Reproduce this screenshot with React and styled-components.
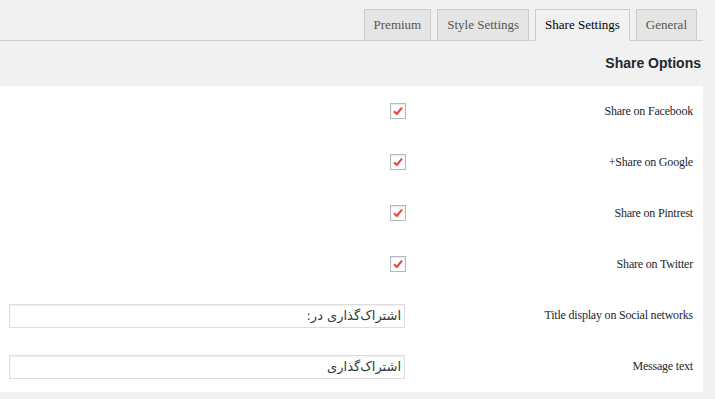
import styled, { createGlobalStyle } from "styled-components";

const GlobalStyle = createGlobalStyle`
    body {
        margin: 0;
        background: #f1f1f1;
        font-family: "Liberation Serif", serif;
        color: #23282d;
    }
`;

const rows = [
    { label: "Share on Facebook", type: "check" },
    { label: "Share on Google+", type: "check" },
    { label: "Share on Pintrest", type: "check" },
    { label: "Share on Twitter", type: "check" },
    { label: "Title display on Social networks", type: "text", value: "اشتراک\u200cگذاری در:" },
    { label: "Message text", type: "text", value: "اشتراک\u200cگذاری" },
];

const tabs = ["General", "Share Settings", "Style Settings", "Premium"];

const Check = () => (
    <CheckBox>
        <svg width="12" height="12" viewBox="0 0 12 12">
            <polyline
                points="2,6.2 4.8,9 10,2.6"
                fill="none"
                stroke="#e14d43"
                strokeWidth="2.2"
                strokeLinejoin="round"
            />
        </svg>
    </CheckBox>
);

const App = () => {
    return (
        <Wrap>
            <GlobalStyle />
            <TabBar>
                {tabs.map((t) => (
                    <Tab key={t} $active={t === "Share Settings"}>
                        {t}
                    </Tab>
                ))}
            </TabBar>
            <Heading>Share Options</Heading>
            <Panel>
                {rows.map((r) => (
                    <Row key={r.label}>
                        <Label>{r.label}</Label>
                        <Field>
                            {r.type === "check" ? (
                                <Check />
                            ) : (
                                <TextInput type="text" defaultValue={r.value} />
                            )}
                        </Field>
                    </Row>
                ))}
            </Panel>
        </Wrap>
    );
};

const Wrap = styled.div`
    width: 703px;
    direction: rtl;
`;

const TabBar = styled.div`
    display: flex;
    gap: 6px;
    padding: 9px 6px 0 0;
    border-bottom: 1px solid #ccc;
    height: 31px;
    box-sizing: content-box;
`;

const Tab = styled.div`
    box-sizing: border-box;
    height: 32px;
    margin-bottom: -1px;
    padding: 0 9px;
    display: flex;
    align-items: center;
    border: 1px solid #ccc;
    border-bottom: 1px solid ${(p) => (p.$active ? "#f1f1f1" : "#ccc")};
    background: ${(p) => (p.$active ? "#f1f1f1" : "#e5e5e5")};
    color: ${(p) => (p.$active ? "#000" : "#555")};
    font-size: 13px;
    white-space: nowrap;
`;

const Heading = styled.h2`
    margin: 0;
    height: 45px;
    line-height: 45px;
    padding-right: 2px;
    font-family: "Liberation Sans", Arial, sans-serif;
    font-size: 14px;
    font-weight: bold;
    color: #23282d;
`;

const Panel = styled.div`
    background: #fff;
`;

const Row = styled.div`
    display: grid;
    grid-template-columns: 298px 1fr;
    height: 51px;
    align-items: center;
`;

const Label = styled.div`
    padding-right: 10px;
    font-size: 12px;
    color: #23282d;
    letter-spacing: -0.2px;
`;

const Field = styled.div`
    display: flex;
    padding-left: 9px;
`;

const CheckBox = styled.span`
    width: 14px;
    height: 14px;
    border: 1px solid #b4b9be;
    box-sizing: content-box;
    display: flex;
    align-items: center;
    justify-content: center;
    margin-right: -1px;
    margin-top: -1px;
    box-shadow: inset 0 1px 2px rgba(0, 0, 0, 0.1);
`;

const TextInput = styled.input`
    width: 100%;
    height: 24px;
    box-sizing: border-box;
    border: 1px solid #ddd;
    box-shadow: inset 0 1px 2px rgba(0, 0, 0, 0.07);
    padding: 0 3px;
    font-family: "DejaVu Sans", sans-serif;
    font-size: 13px;
    color: #32373c;
    direction: rtl;
    outline: none;
    background: #fff;
`;

export default App;
